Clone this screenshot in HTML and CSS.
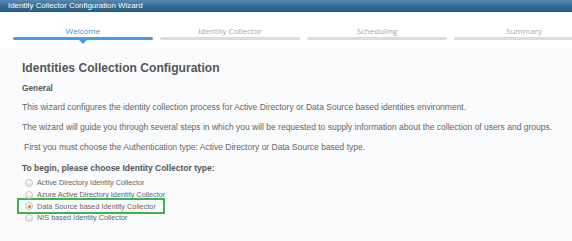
FILE: index.html
```html
<!DOCTYPE html>
<html>
<head>
<meta charset="utf-8">
<link rel="stylesheet" href="styles.css">
</head>
<body>
<div class="titlebar">Identity Collector Configuration Wizard</div>
<div class="steps">
  <div class="step active"><span class="label">Welcome</span><span class="bar"></span></div>
  <div class="step"><span class="label">Identity Collector</span><span class="bar"></span></div>
  <div class="step"><span class="label">Scheduling</span><span class="bar"></span></div>
  <div class="step"><span class="label">Summary</span><span class="bar"></span></div>
</div>
<div class="content">
  <h1>Identities Collection Configuration</h1>
  <h2>General</h2>
  <p>This wizard configures the identity collection process for Active Directory or Data Source based identities environment.</p>
  <p>The wizard will guide you through several steps in which you will be requested to supply information about the collection of users and groups.</p>
  <p class="indent">First you must choose the Authentication type: Active Directory or Data Source based type.</p>
  <h3>To begin, please choose Identity Collector type:</h3>
  <div class="options">
    <div class="opt"><span class="radio"></span>Active Directory Identity Collector</div>
    <div class="opt"><span class="radio"></span>Azure Active Directory Identity Collector</div>
    <div class="opt selected"><span class="radio checked"></span>Data Source based Identity Collector</div>
    <div class="opt"><span class="radio"></span>NIS based Identity Collector</div>
  </div>
</div>
</body>
</html>
```
FILE: styles.css
```css
html, body { margin: 0; padding: 0; }
body {
  width: 572px; height: 241px; overflow: hidden;
  background: #fafbfc;
  font-family: "Liberation Sans", Arial, sans-serif;
  color: #666;
}
.titlebar {
  height: 12px;
  background: linear-gradient(#5a88ad, #336a94 55%, #2a5d85);
  color: #fff;
  font-family: "Liberation Sans", Arial, sans-serif;
  font-size: 7.9px;
  line-height: 12px;
  padding-left: 8px;
}
.steps {
  display: grid;
  grid-template-columns: repeat(4, 140px);
  gap: 7px;
  padding: 14px 0 0 13px;
  background: #fff;
  height: 37px;
  box-sizing: border-box;
}
.step { display: flex; flex-direction: column; align-items: center; position: relative; }
.label {
  font-family: "Open Sans", "DejaVu Sans", sans-serif;
  font-size: 8px; line-height: 10px; color: #a8a8a8;
}
.bar { margin-top: 1px; width: 100%; height: 3px; border-radius: 2px; background: #dcdcdc; }
.step.active .label { color: #3c8fd9; }
.step.active .bar { background: #4a9be2; }
.step.active::after {
  content: ""; position: absolute; left: 66px; top: 14px;
  border-left: 4px solid transparent; border-right: 4px solid transparent;
  border-top: 4px solid #4a9be2;
}
.content { padding: 11px 0 0 22px; }
h1 { margin: 0; font-size: 12.1px; font-weight: bold; color: #555; line-height: 16px; }
h2 { margin: 7px 0 0; font-size: 8.3px; font-weight: bold; color: #555; line-height: 10px; }
p { margin: 9px 0 0; font-size: 8.5px; line-height: 10px; color: #666; white-space: nowrap; }
p + p { margin-top: 10px; }
p.indent { padding-left: 2px; }
h3 { margin: 11px 0 0; font-size: 8.5px; font-weight: bold; color: #555; line-height: 10px; }
.options { margin-top: 4px; }
.opt {
  display: flex; align-items: center; gap: 4px;
  font-size: 7.3px; color: #666; height: 11.7px; padding-left: 3px;
  box-sizing: border-box;
}
.opt.selected { outline: 2px solid #3cb44b; margin-left: -3px; padding-left: 6px; width: 144px; }
.radio {
  width: 8px; height: 8px; border-radius: 50%;
  border: 1px solid #c4c4c4; background: linear-gradient(#fff, #e4e4e4);
  box-sizing: border-box; flex: none; position: relative;
}
.radio.checked::after {
  content: ""; position: absolute; left: 2px; top: 2px; width: 3px; height: 3px;
  border-radius: 50%; background: #f07a2a;
}
```
